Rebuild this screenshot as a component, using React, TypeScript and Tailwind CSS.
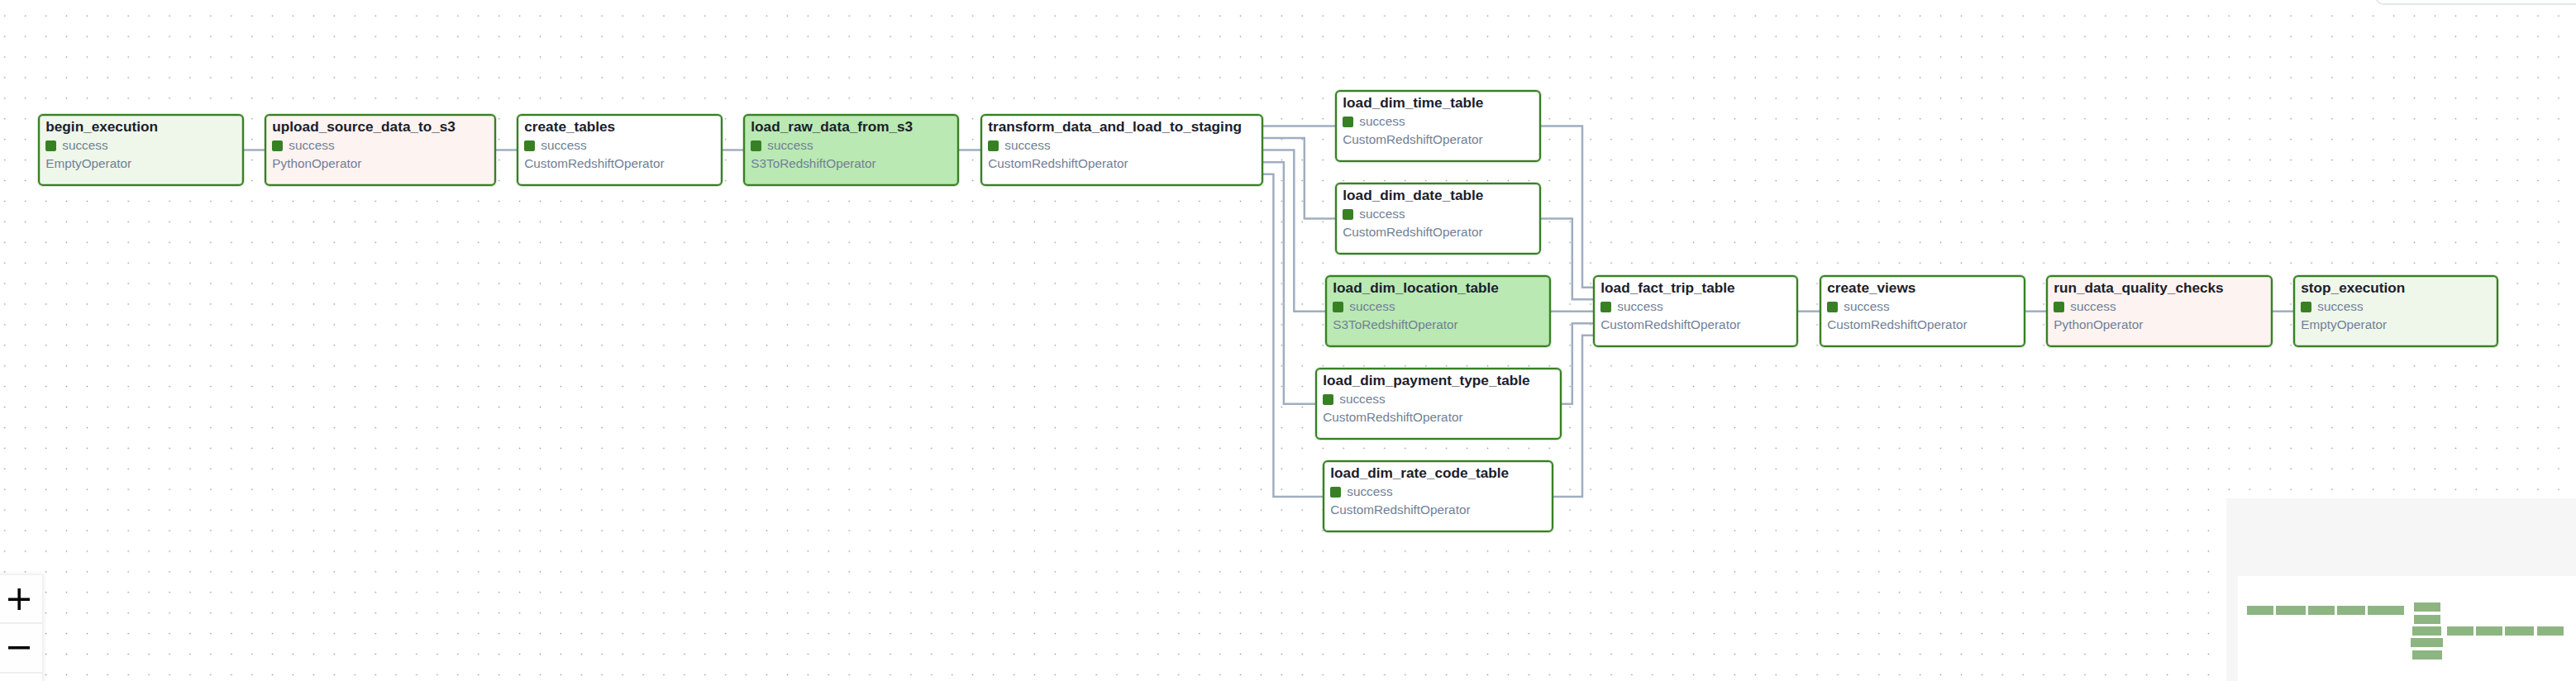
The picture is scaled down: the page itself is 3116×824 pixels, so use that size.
type Kind = "empty" | "python" | "custom" | "s3";

const operators: Record<Kind, { label: string; bg: string }> = {
  empty: { label: "EmptyOperator", bg: "bg-[#eff7eb]" },
  python: { label: "PythonOperator", bg: "bg-[#fdf3f0]" },
  custom: { label: "CustomRedshiftOperator", bg: "bg-white" },
  s3: { label: "S3ToRedshiftOperator", bg: "bg-[#bae9b3]" },
};

const tasks: { id: string; kind: Kind; x: number; y: number; w: number }[] = [
  { id: "begin_execution", kind: "empty", x: 46, y: 138, w: 249 },
  { id: "upload_source_data_to_s3", kind: "python", x: 320, y: 138, w: 280 },
  { id: "create_tables", kind: "custom", x: 625, y: 138, w: 249 },
  { id: "load_raw_data_from_s3", kind: "s3", x: 899, y: 138, w: 261 },
  { id: "transform_data_and_load_to_staging", kind: "custom", x: 1186, y: 138, w: 342 },
  { id: "load_dim_time_table", kind: "custom", x: 1615, y: 109, w: 249 },
  { id: "load_dim_date_table", kind: "custom", x: 1615, y: 221, w: 249 },
  { id: "load_dim_location_table", kind: "s3", x: 1603, y: 333, w: 273 },
  { id: "load_dim_payment_type_table", kind: "custom", x: 1591, y: 445, w: 298 },
  { id: "load_dim_rate_code_table", kind: "custom", x: 1600, y: 557, w: 279 },
  { id: "load_fact_trip_table", kind: "custom", x: 1927, y: 333, w: 248 },
  { id: "create_views", kind: "custom", x: 2201, y: 333, w: 249 },
  { id: "run_data_quality_checks", kind: "python", x: 2475, y: 333, w: 274 },
  { id: "stop_execution", kind: "empty", x: 2774, y: 333, w: 248 },
];

const edges = [
  "M294 181.5H321",
  "M599 181.5H626",
  "M873 181.5H900",
  "M1159 181.5H1187",
  "M1527 152.5H1616",
  "M1527 167.1H1577.8V264.6H1616",
  "M1527 181.6H1565.3V376.7H1604",
  "M1527 196.2H1552.9V488.8H1592",
  "M1527 210.7H1540.4V600.9H1601",
  "M1863 152.5H1914V347.7H1928",
  "M1863 264.6H1901.8V362.2H1928",
  "M1875 376.7H1928",
  "M1888 488.8H1901.8V391.2H1928",
  "M1878 600.9H1914V405.8H1928",
  "M2174 376.7H2202",
  "M2449 376.7H2476",
  "M2748 376.7H2775",
];

const minimap = [
  [58, 153, 32],
  [93, 153, 36],
  [132, 153, 32],
  [167, 153, 34],
  [204, 153, 44],
  [260, 149, 32],
  [260, 164, 32],
  [258, 178, 35],
  [256, 192, 39],
  [258, 207, 36],
  [300, 178, 32],
  [335, 178, 32],
  [370, 178, 35],
  [409, 178, 32],
];

function TaskNode({ task }: { task: (typeof tasks)[number] }) {
  const op = operators[task.kind];
  return (
    <div
      className={`absolute flex h-[87px] flex-col rounded-[6px] border-2 border-[#388024] pl-[7.3px] text-[15.3px] leading-[20px] whitespace-nowrap text-[#718096] shadow-[0_0_0_1px_rgba(56,128,36,0.22),inset_0_0_0_1px_rgba(56,128,36,0.22)] ${op.bg}`}
      style={{ left: task.x, top: task.y, width: task.w }}
    >
      <span className="mt-[3px] text-[17.2px] leading-[20px] font-bold text-[#1a202c]">{task.id}</span>
      <span className="mt-[3px] flex h-5 items-center">
        <i className="mr-[7px] size-[13px] rounded-[2px] bg-[#388024]" />
        success
      </span>
      <span className="mt-[2px]">{op.label}</span>
    </div>
  );
}

export default function App() {
  return (
    <main className="relative h-[824px] w-[3116px] overflow-hidden bg-white font-['Liberation_Sans',sans-serif]">
      <svg className="absolute inset-0" width="3116" height="824">
        <defs>
          <pattern id="dots" x="-6.7" y="6.7" width="24.913" height="24.913" patternUnits="userSpaceOnUse">
            <circle cx="12.456" cy="12.456" r="0.83" fill="#91919a" />
          </pattern>
        </defs>
        <rect width="3116" height="824" fill="url(#dots)" />
        <g fill="none" stroke="#a0aec0" strokeWidth="2.5">
          {edges.map((d) => (
            <path key={d} d={d} />
          ))}
        </g>
      </svg>

      {tasks.map((t) => (
        <TaskNode key={t.id} task={t} />
      ))}

      <div className="absolute -top-10 left-[2873px] h-[46px] w-[300px] rounded-[10px] border-2 border-[#e2e8f0] bg-white" />

      <div className="absolute top-[696px] left-0 flex w-[51px] flex-col shadow-[0_0_4px_2px_rgba(0,0,0,0.08)]">
        <button className="flex h-[59px] items-center border-b-2 border-[#eee] bg-[#fefefe] pl-[10px]">
          <svg width="26" height="26" viewBox="0 0 26 26">
            <path d="M0 13.3H26M13.2 0V26" stroke="#000" strokeWidth="3.5" />
          </svg>
        </button>
        <button className="flex h-[60px] items-center border-b-2 border-[#eee] bg-[#fefefe] pl-[10px]">
          <svg width="26" height="4" viewBox="0 0 26 4">
            <path d="M0 1.75H26" stroke="#000" strokeWidth="3.5" />
          </svg>
        </button>
        <div className="h-[20px] bg-[#fefefe]" />
      </div>

      <svg className="absolute top-[603px] left-[2693px] bg-[#f6f6f6]" width="423" height="221">
        <path d="M14 94H423V221H14Z" fill="#fff" />
        {minimap.map(([x, y, w]) => (
          <rect key={`${x}-${y}`} x={x - 33} y={y - 23} width={w} height="11" fill="#8db581" />
        ))}
      </svg>
    </main>
  );
}
